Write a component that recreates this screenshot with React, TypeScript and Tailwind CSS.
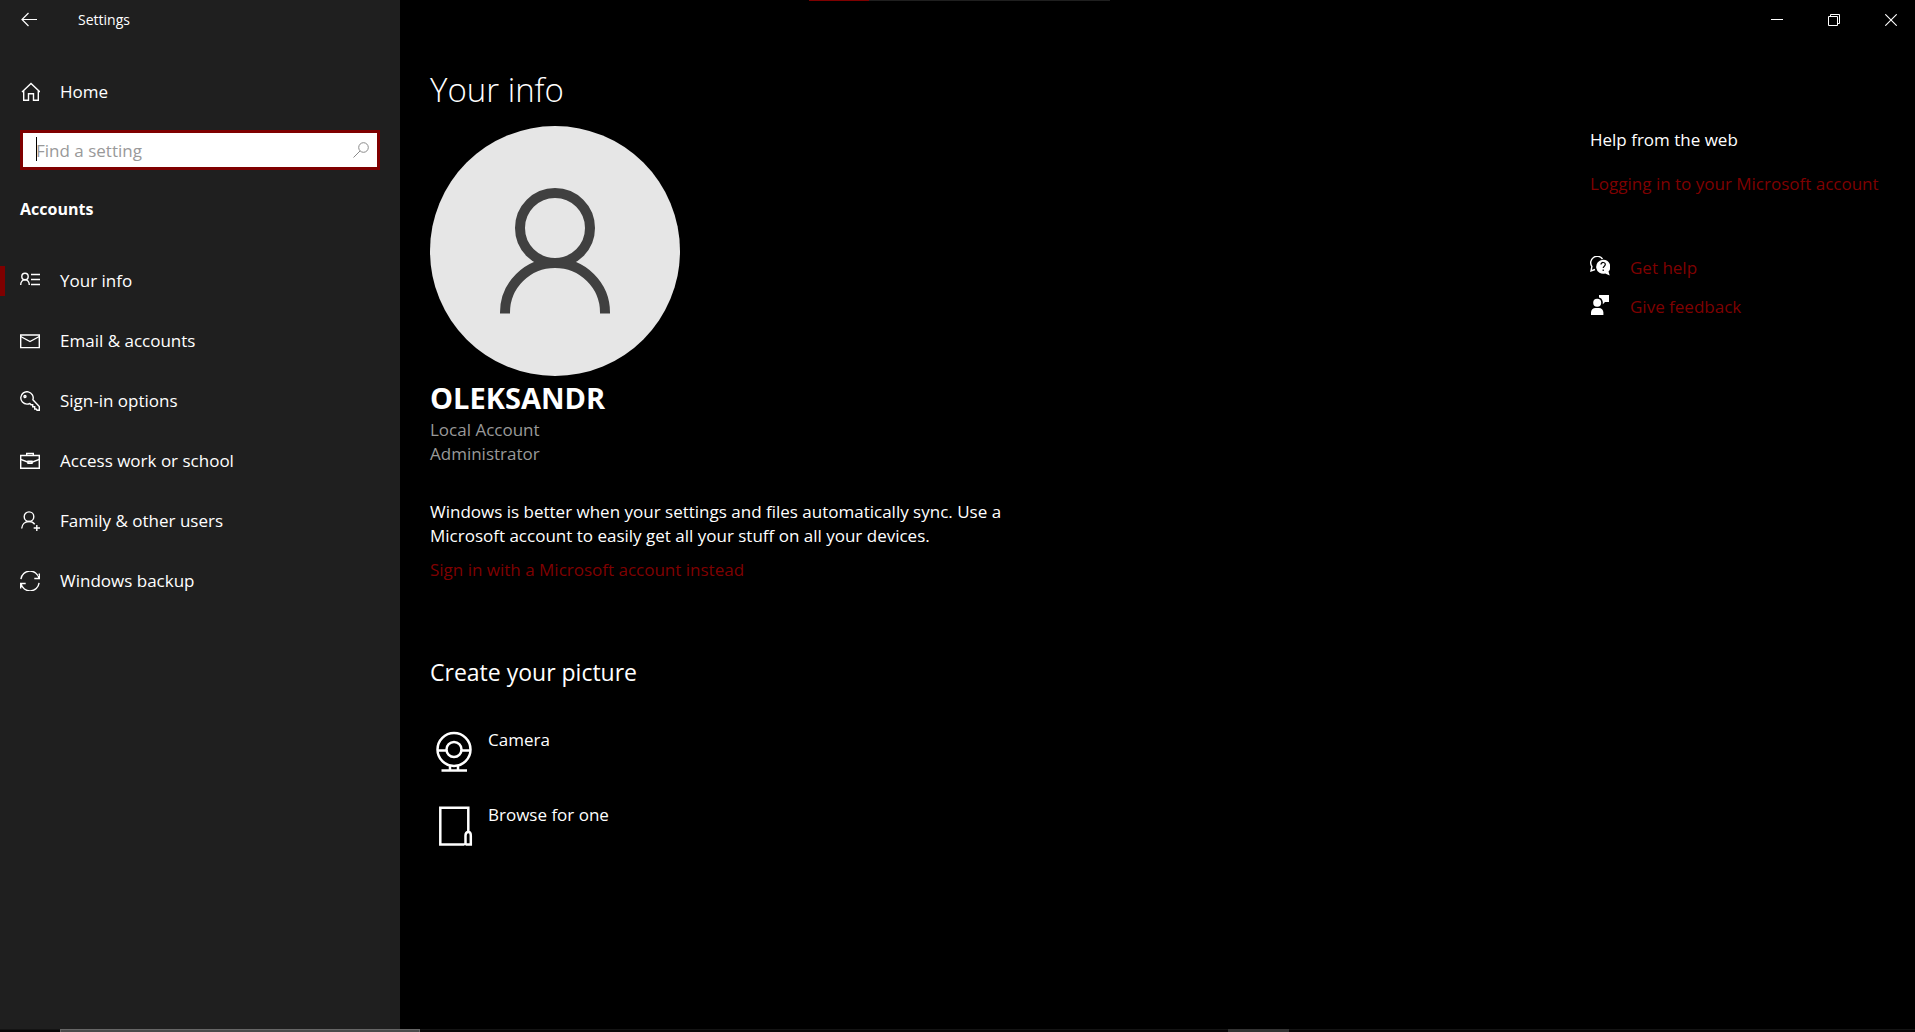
import type { ReactNode } from "react";

function Glyph({ size = 20, width = 1.4, children }: { size?: number; width?: number; children: ReactNode }) {
  return (
    <svg
      width={size}
      height={size}
      viewBox={`0 0 ${size} ${size}`}
      fill="none"
      stroke="currentColor"
      strokeWidth={width}
      className="shrink-0"
      aria-hidden="true"
    >
      {children}
    </svg>
  );
}

const navItems: { label: string; icon: ReactNode; active?: boolean }[] = [
  {
    label: "Your info",
    active: true,
    icon: (
      <Glyph>
        <circle cx="5" cy="5.5" r="3.2" />
        <path d="M.7 14c0-3 1.800-5.300 4.300-5.300S9.300 11 9.300 14" />
        <path d="M11 3.500h9M11 8.500h9M11 13.500h9" />
      </Glyph>
    ),
  },
  {
    label: "Email & accounts",
    icon: (
      <Glyph>
        <path d="M.7 4h18.600v12.600H.7z" />
        <path d="M.7 5.500 10 10.500l9.300-5" />
      </Glyph>
    ),
  },
  {
    label: "Sign-in options",
    icon: (
      <Glyph>
        <path d="M12.900 8.800A6.200 6.200 0 1 0 7 13.100c1.200 0 2-.2 2.900-.6l1.100 1.200h1.700v2.100h2v2.200h1.400l1 1.200h2.200v-3.600z" />
        <circle cx="5" cy="5.500" r="1" />
      </Glyph>
    ),
  },
  {
    label: "Access work or school",
    icon: (
      <Glyph>
        <path d="M.7 4.500h18.600v12.700H.7z" />
        <path d="M6.700 4.500v-2h6.600v2M.7 8.300l6.800 2.700h5l6.800-2.700" />
        <path d="M8 10.200h4v2.200H8z" />
      </Glyph>
    ),
  },
  {
    label: "Family & other users",
    icon: (
      <Glyph>
        <circle cx="9" cy="5.700" r="4.800" />
        <path d="M1.700 17.500c.3-4.200 3.200-7 7.300-7 2.500 0 4.400 1 5.700 2.700M16.800 14v6M13.700 17H20" />
      </Glyph>
    ),
  },
  {
    label: "Windows backup",
    icon: (
      <Glyph>
        <path d="M.9 8.200A9.200 9.200 0 0 1 19 7.300M19.300 2.500v5h-5M19.100 11.800A9.200 9.200 0 0 1 1 12.700M.7 17.500v-5h5" />
      </Glyph>
    ),
  },
];

function Sidebar() {
  return (
    <aside className="w-[400px] shrink-0 bg-[#1f1f1f]">
      <div className="flex h-10 items-center">
        <button type="button" aria-label="Back" className="flex w-[58px] justify-center">
          <Glyph size={16} width={1.2}>
            <path d="M16 7.500H1M7.500 1 1 7.500 7.500 14" />
          </Glyph>
        </button>
        <span className="pl-5 text-sm leading-6">Settings</span>
      </div>

      <a href="#home" className="mt-[22px] flex h-[60px] items-center gap-5 px-5">
        <Glyph>
          <path d="M2 10 11 1.500 20 10M3.700 8.800v9.400h4.800v-6.500h5v6.500h4.800V8.800" />
        </Glyph>
        Home
      </a>

      <div className="relative mx-5 mt-2">
        <input
          type="search"
          aria-label="Find a setting"
          placeholder="Find a setting"
          className="h-10 w-full border-[3px] border-[#7f0000] bg-white pr-10 pl-[13px] text-black outline-none placeholder:text-[#999999]"
        />
        <span className="absolute top-[7px] left-4 h-6 w-px bg-black" aria-hidden="true" />
        <button type="button" aria-label="Search" className="absolute top-3 right-[11px] text-[#8a8a8a]">
          <Glyph size={16} width={1}>
            <circle cx="10.500" cy="5.500" r="4.800" />
            <path d="M7 9 .5 15.500" />
          </Glyph>
        </button>
      </div>

      <h2 className="mt-[27px] px-5 text-base font-bold">Accounts</h2>

      <nav className="mt-[30px]">
        {navItems.map((item) => (
          <a
            key={item.label}
            href="#section"
            aria-current={item.active ? "page" : undefined}
            className="relative flex h-[60px] items-center gap-5 px-5"
          >
            {item.active && <span className="absolute left-0 h-[30px] w-[5px] bg-[#7f0000]" />}
            {item.icon}
            {item.label}
          </a>
        ))}
      </nav>
    </aside>
  );
}

function WindowControls() {
  return (
    <header className="flex h-10 items-center justify-end gap-[9px]">
      <button type="button" aria-label="Minimize" className="flex w-12 justify-center">
        <Glyph size={12} width={1}>
          <path d="M0 5.500h12" />
        </Glyph>
      </button>
      <button type="button" aria-label="Restore" className="flex w-12 justify-center">
        <Glyph size={12} width={1}>
          <path d="M.5 2.500h9v9h-9zM2.500 2.500v-2h9v9h-2" />
        </Glyph>
      </button>
      <button type="button" aria-label="Close" className="flex w-12 justify-center">
        <Glyph size={12} width={1.100}>
          <path d="m.3.3 11.400 11.400M11.700.3.3 11.700" />
        </Glyph>
      </button>
    </header>
  );
}

function Avatar() {
  return (
    <svg viewBox="0 0 250 250" className="mt-3 size-[250px]" role="img" aria-label="Account picture">
      <circle cx="125" cy="125" r="125" fill="#e6e6e6" />
      <g fill="none" stroke="#404040" strokeWidth="10">
        <circle cx="125" cy="102" r="35" />
        <path d="M75 187.500v-1a50 49.500 0 0 1 100 0v1" />
      </g>
    </svg>
  );
}

function Profile() {
  return (
    <section className="w-[580px]">
      <h1 className="text-[33px] leading-[48px] font-light">Your info</h1>
      <Avatar />
      <p className="mt-1 text-[29px] leading-9 font-bold">OLEKSANDR</p>
      <p className="mt-0.5 text-[#999999]">Local Account</p>
      <p className="text-[#999999]">Administrator</p>
      <p className="mt-[34px]">
        Windows is better when your settings and files automatically sync. Use a
        <br />
        Microsoft account to easily get all your stuff on all your devices.
      </p>
      <a href="#sign-in" className="mt-[10px] inline-block text-[#7f0000]">
        Sign in with a Microsoft account instead
      </a>

      <h2 className="mt-[74px] text-[23px] leading-8">Create your picture</h2>
      <button type="button" className="mt-10 flex h-[50px] items-start gap-[10px]">
        <Glyph size={48} width={2.500}>
          <circle cx="24" cy="21.500" r="16.500" />
          <circle cx="24" cy="21.500" r="7.500" />
          <path d="M7.500 22.500h9M31.500 22.500h9M20 38v4M28 38v4M11.500 42.500h25.500" />
        </Glyph>
        Camera
      </button>
      <button type="button" className="mt-[25px] flex h-[50px] items-start gap-[10px]">
        <Glyph size={48} width={2.500}>
          <path d="M34.500 41.500H10.300V4.800h28v24M35.500 42V32.500c0-2 1-3.500 3-3.500s2.300 1.500 2.300 3.500v9h-5.300" />
        </Glyph>
        Browse for one
      </button>
    </section>
  );
}

function HelpPanel() {
  return (
    <aside className="w-[325px] shrink-0 pt-[62px]">
      <h2>Help from the web</h2>
      <a href="#login-help" className="mt-5 inline-block text-[#7f0000]">
        Logging in to your Microsoft account
      </a>
      <a href="#get-help" className="mt-[60px] flex gap-5 text-[#7f0000]">
        <svg width="20" height="20" viewBox="0 0 20 20" className="shrink-0 text-white" aria-hidden="true">
          <path d="M12.500 3A6.300 6.300 0 0 0 1.900 10.500L1 15l4-1.500" fill="none" stroke="currentColor" strokeWidth="1.400" />
          <path d="M13 3.800a7 7 0 1 0 2.200 13.700L19.700 19.500l-1.200-4A7 7 0 0 0 13 3.800z" fill="currentColor" />
          <path d="M11 8.500c0-2.800 4.300-2.600 4.300 0 0 1.700-2.100 1.700-2.100 3.600M13.200 13.500v1.400" fill="none" stroke="#000000" strokeWidth="1.200" />
        </svg>
        Get help
      </a>
      <a href="#feedback" className="mt-[15px] flex gap-5 text-[#7f0000]">
        <svg width="20" height="20" viewBox="0 0 20 20" className="shrink-0 text-white" fill="currentColor" aria-hidden="true">
          <circle cx="7.200" cy="7.700" r="4" />
          <path d="M1 20v-2.500c0-2.500 2-4.500 4.500-4.500h3.400c2.500 0 4.500 2 4.500 4.500V20zM9 0h10v7h-4l-2.200 2.300V7C12.300 4.300 11 3 9 2.600z" />
        </svg>
        Give feedback
      </a>
    </aside>
  );
}

export default function App() {
  return (
    <div className="relative flex min-h-screen flex-col bg-black font-['Open_Sans',sans-serif] text-[17px] leading-6 text-white">
      <div className="absolute top-0 left-[809px] flex h-px w-[301px] bg-[#1f1f1f]" aria-hidden="true">
        <span className="w-1/5 bg-[#7f0000]" />
      </div>
      <div className="flex flex-1">
        <Sidebar />
        <div className="flex min-w-0 flex-1 flex-col">
          <WindowControls />
          <main className="flex justify-between pt-[26px] pl-[30px]">
            <Profile />
            <HelpPanel />
          </main>
        </div>
      </div>
      <footer className="flex h-[3px] border-t border-[#141414] bg-[#0a0507]" aria-hidden="true">
        <span className="-mt-px ml-[60px] w-[360px] border border-b-0 border-[#666666] bg-[#4a4a4a]" />
        <span className="-mt-px ml-[808px] w-[61px] bg-[#333333]" />
      </footer>
    </div>
  );
}
